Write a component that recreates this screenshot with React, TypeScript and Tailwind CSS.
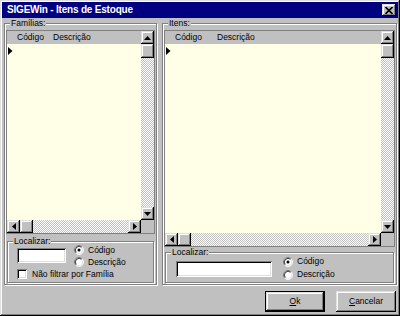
import React from "react";

const raised =
  "shadow-[inset_-1px_-1px_#000,inset_1px_1px_#dfdfdf,inset_-2px_-2px_#808080,inset_2px_2px_#fff]";
const sunken =
  "shadow-[inset_1px_1px_#808080,inset_-1px_-1px_#fff,inset_2px_2px_#000,inset_-2px_-2px_#dfdfdf]";
const etched = "border border-[#808080] shadow-[inset_1px_1px_#fff,1px_1px_#fff]";
const dither =
  "bg-[#c0c0c0] bg-[image:repeating-conic-gradient(#fff_0_25%,#c0c0c0_0_50%)] bg-[length:2px_2px]";

type Dir = "up" | "down" | "left" | "right";

function Tri({ dir }: { dir: Dir }) {
  if (dir === "up")
    return (
      <svg width="7" height="4" viewBox="0 0 7 4">
        <polygon points="0,4 7,4 3.5,0" fill="#000" />
      </svg>
    );
  if (dir === "down")
    return (
      <svg width="7" height="4" viewBox="0 0 7 4">
        <polygon points="0,0 7,0 3.5,4" fill="#000" />
      </svg>
    );
  if (dir === "left")
    return (
      <svg width="4" height="7" viewBox="0 0 4 7">
        <polygon points="4,0 4,7 0,3.5" fill="#000" />
      </svg>
    );
  return (
    <svg width="4" height="7" viewBox="0 0 4 7">
      <polygon points="0,0 0,7 4,3.5" fill="#000" />
    </svg>
  );
}

function SBtn({ dir }: { dir: Dir }) {
  return (
    <div className={`w-[13px] h-[13px] shrink-0 bg-[#c0c0c0] ${raised} flex items-center justify-center`}>
      <Tri dir={dir} />
    </div>
  );
}

function VScroll() {
  return (
    <div className="w-[13px] flex flex-col shrink-0">
      <SBtn dir="up" />
      <div className={`h-[14px] shrink-0 bg-[#c0c0c0] ${raised}`} />
      <div className={`flex-1 ${dither}`} />
      <SBtn dir="down" />
    </div>
  );
}

function HScroll() {
  return (
    <div className="flex-1 flex h-[13px]">
      <SBtn dir="left" />
      <div className={`w-[13px] shrink-0 bg-[#c0c0c0] ${raised}`} />
      <div className={`flex-1 ${dither}`} />
      <SBtn dir="right" />
    </div>
  );
}

function DataGrid({ heightClass, col1Class }: { heightClass: string; col1Class: string }) {
  return (
    <div className={`${heightClass} w-full border border-[#808080] flex flex-col bg-[#c0c0c0]`}>
      <div className="flex flex-1 min-h-0">
        <div className="flex-1 flex flex-col min-w-0">
          <div className="h-[13px] bg-[#c0c0c0] flex items-center leading-none">
            <div className="w-[10px] shrink-0" />
            <div className={col1Class}>Código</div>
            <div>Descrição</div>
          </div>
          <div className="flex-1 bg-[#ffffe7]">
            <div className="h-[13px] flex items-center pl-[1px]">
              <svg width="5" height="8" viewBox="0 0 5 8">
                <polygon points="0,0 0,8 4.5,4" fill="#000" />
              </svg>
            </div>
          </div>
        </div>
        <VScroll />
      </div>
      <div className="flex h-[13px]">
        <HScroll />
        <div className="w-[13px] bg-[#c0c0c0]" />
      </div>
    </div>
  );
}

function Radio({ checked }: { checked?: boolean }) {
  return (
    <svg width="10" height="10" viewBox="0 0 12 12" className="shrink-0">
      <circle cx="6" cy="6" r="5" fill="#fff" />
      <path d="M2.11 9.89 A5.5 5.5 0 0 1 9.89 2.11" stroke="#808080" fill="none" />
      <path d="M9.89 2.11 A5.5 5.5 0 0 1 2.11 9.89" stroke="#fff" fill="none" />
      <path d="M2.82 9.18 A4.5 4.5 0 0 1 9.18 2.82" stroke="#000" fill="none" />
      <path d="M9.18 2.82 A4.5 4.5 0 0 1 2.82 9.18" stroke="#dfdfdf" fill="none" />
      {checked && <circle cx="6" cy="6" r="1.8" fill="#000" />}
    </svg>
  );
}

function GroupLabel({ text }: { text: string }) {
  return (
    <div className="absolute top-[-6px] left-[5px] px-[1px] bg-[#c0c0c0] leading-[10px]">{text}</div>
  );
}

export default function App() {
  return (
    <div className="w-[400px] h-[316px] bg-[#c0c0c0] font-['Liberation_Sans',Arial,sans-serif] text-[8.5px] text-black">
      <div className={`w-full h-full p-[2px] flex flex-col ${raised}`}>
        {/* Title bar */}
        <div className="h-[16px] shrink-0 bg-[#000080] flex items-center pl-[5px] pr-[2px]">
          <div className="flex-1 text-white font-bold text-[10px] tracking-[-0.2px] leading-none">
            SIGEWin - Itens de Estoque
          </div>
          <div className={`w-[14px] h-[12px] bg-[#c0c0c0] ${raised} flex items-center justify-center`}>
            <svg width="8" height="7" viewBox="0 0 8 7">
              <path d="M0.5 0 L7.5 7 M7.5 0 L0.5 7" stroke="#000" strokeWidth="1.6" />
            </svg>
          </div>
        </div>

        {/* Body */}
        <div className="flex-1 flex flex-col pl-[2px] pr-[1px] pt-[5px]">
          <div className="flex gap-[5px]">
            {/* Famílias */}
            <div className={`relative w-[153px] h-[262px] ${etched} px-[1px] pt-[6px] pb-[1px] flex flex-col`}>
              <GroupLabel text="Famílias:" />
              <DataGrid heightClass="h-[204px]" col1Class="w-[36px]" />
              <div className={`relative mt-[7px] mx-[1px] h-[42px] ${etched} pl-[9px] pt-[2px]`}>
                <GroupLabel text="Localizar:" />
                <div className="flex">
                  <div className={`mt-[4px] w-[49px] h-[15px] bg-white ${sunken}`} />
                  <div className="ml-[8px] flex flex-col">
                    <div className="h-[12px] flex items-center gap-[4px]">
                      <Radio checked />
                      <span>Código</span>
                    </div>
                    <div className="h-[12px] flex items-center gap-[4px]">
                      <Radio />
                      <span>Descrição</span>
                    </div>
                  </div>
                </div>
                <div className="h-[12px] flex items-center gap-[5px]">
                  <div className={`w-[10px] h-[10px] bg-white ${sunken}`} />
                  <span>Não filtrar por Família</span>
                </div>
              </div>
            </div>

            {/* Itens */}
            <div className={`relative w-[235px] h-[262px] ${etched} px-[1px] pt-[6px] pb-[1px] flex flex-col`}>
              <GroupLabel text="Itens:" />
              <DataGrid heightClass="h-[217px]" col1Class="w-[42px]" />
              <div className={`relative mt-[5px] mx-[1px] h-[31px] ${etched} pl-[10px] pt-[2px] flex`}>
                <GroupLabel text="Localizar:" />
                <div className={`mt-[6px] w-[96px] h-[16px] bg-white ${sunken}`} />
                <div className="ml-[11px] flex flex-col">
                  <div className="h-[13px] flex items-center gap-[4px]">
                    <Radio checked />
                    <span>Código</span>
                  </div>
                  <div className="h-[13px] flex items-center gap-[4px]">
                    <Radio />
                    <span>Descrição</span>
                  </div>
                </div>
              </div>
            </div>
          </div>

          {/* Buttons */}
          <div className="mt-[6px] mr-[1px] flex justify-end gap-[11px]">
            <div className="w-[60px] h-[21px] border border-black">
              <div className={`w-full h-full bg-[#c0c0c0] ${raised} flex items-center justify-center`}>
                <span>
                  <span className="underline">O</span>k
                </span>
              </div>
            </div>
            <div className={`w-[60px] h-[21px] bg-[#c0c0c0] ${raised} flex items-center justify-center`}>
              <span>
                <span className="underline">C</span>ancelar
              </span>
            </div>
          </div>
        </div>
      </div>
    </div>
  );
}
